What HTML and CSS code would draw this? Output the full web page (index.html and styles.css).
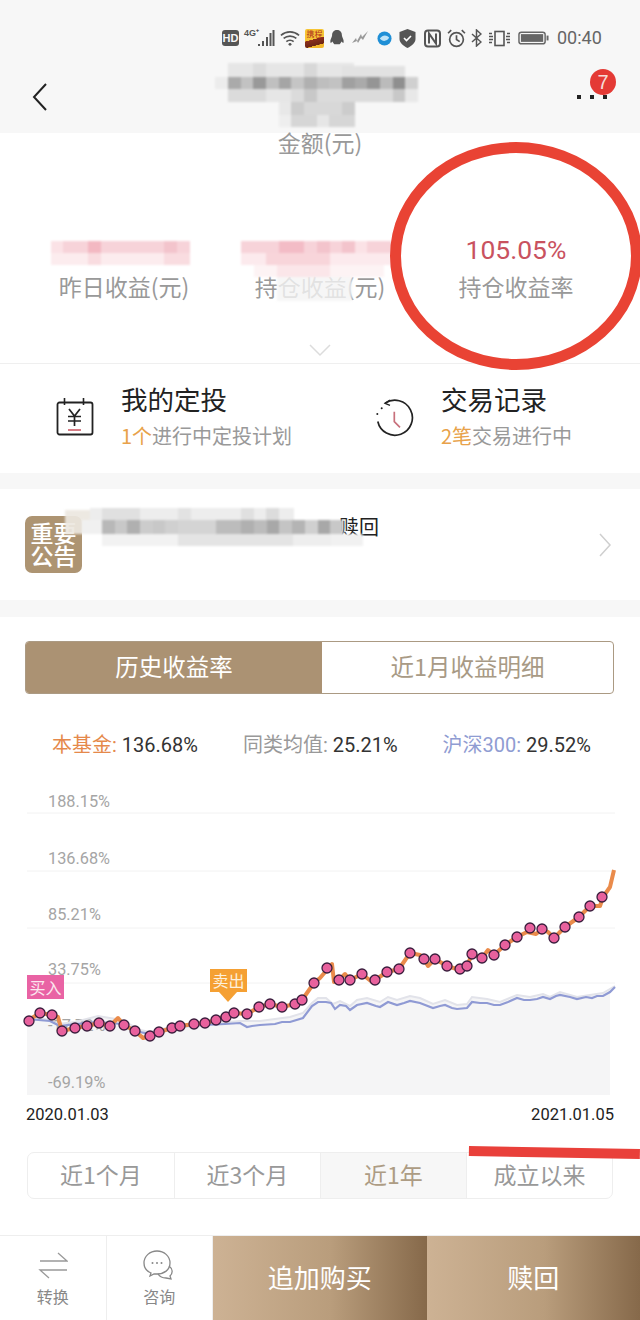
FILE: index.html
```html
<!DOCTYPE html>
<html lang="zh">
<head>
<meta charset="utf-8">
<title>持仓</title>
<link rel="stylesheet" href="styles.css">
</head>
<body>
<div class="page">
  <header class="top">
    <div class="status">
      <span class="hd">HD</span>
      <span class="net">4G⁺</span>
      <svg class="st sig" width="17" height="18" viewBox="0 0 17 18"><path d="M1 15v2M5 12v5M9 8v9M12.500 4v13M15.500 1v16" stroke="#555" stroke-width="2"/></svg>
      <svg class="st" width="20" height="18" viewBox="0 0 22 18"><path d="M1 6c6-5 14-5 20 0M4 9.500c4-3.500 10-3.500 14 0M7 13c2-2 6-2 8 0" fill="none" stroke="#555" stroke-width="1.800"/><circle cx="11" cy="16" r="1.600" fill="#555"/></svg>
      <span class="appicon">携程</span>
      <svg class="st" width="16" height="20" viewBox="0 0 18 20"><path d="M9 1c-4 0-5.500 3-5.500 6 0 2-2.500 5-2 8 1 1 2-.5 2.500-1 .5 1.500 1 2 2 3h6c1-1 1.500-1.500 2-3 .5.500 1.500 2 2.500 1 .5-3-2-6-2-8 0-3-1.500-6-5.500-6z" fill="#555"/></svg>
      <svg class="st m1" width="18" height="16" viewBox="0 0 18 16"><path d="M1 13l4-5 1 3 4-7 1 3 6-6-5 9-2-2-3 5-1-2z" fill="#999"/></svg>
      <svg class="st m3" width="15" height="15" viewBox="0 0 16 16"><circle cx="8" cy="8" r="7.500" fill="#1f8fd6"/><path d="M3 8c3-4 7-4 10-1-2 4-7 5-10 1z" fill="#bfe3f7"/></svg>
      <svg class="st m2" width="17" height="19" viewBox="0 0 17 19"><path d="M8.500 0l8 3v7c0 4-4 7-8 9-4-2-8-5-8-9V3z" fill="#555"/><path d="M5 9l2.500 2.500L12 7" fill="none" stroke="#fff" stroke-width="1.600"/></svg>
      <svg class="st m3" width="17" height="19" viewBox="0 0 17 18"><rect x="1" y="1" width="15" height="16" rx="3" fill="none" stroke="#555" stroke-width="2"/><path d="M5 14V4l7 10V4" fill="none" stroke="#555" stroke-width="2"/></svg>
      <svg class="st m1" width="19" height="19" viewBox="0 0 18 18"><circle cx="9" cy="10" r="6.500" fill="none" stroke="#555" stroke-width="1.600"/><path d="M9 6v4l3 2M1 4l3-3M17 4l-3-3" fill="none" stroke="#555" stroke-width="1.600"/></svg>
      <svg class="st" width="11" height="18" viewBox="0 0 11 18"><path d="M1 5l9 8-4.500 4V1L10 5l-9 8" fill="none" stroke="#555" stroke-width="1.500"/></svg>
      <svg class="st m1" width="23" height="17" viewBox="0 0 23 16"><rect x="7" y="1" width="9" height="14" fill="none" stroke="#555" stroke-width="1.600"/><path d="M1 3h3M1 6h4M1 9h4M1 12h3M19 3h3M18 6h4M18 9h4M19 12h3" stroke="#555" stroke-width="1.300"/></svg>
      <svg class="st m2" width="31" height="14" viewBox="0 0 32 14"><rect x="1" y="1" width="27" height="12" rx="2.500" fill="none" stroke="#666" stroke-width="1.500"/><rect x="3" y="3" width="23" height="8" fill="#666"/><rect x="29.500" y="4.500" width="2" height="5" fill="#666"/></svg>
      <span class="time">00:40</span>
    </div>
    <div class="nav">
      <svg class="back" width="16" height="28" viewBox="0 0 16 28"><path d="M14 1L2 14l12 13" fill="none" stroke="#222" stroke-width="2"/></svg>
      <div class="more">
        <span class="dots">
          <i></i><i></i><i></i>
        </span>
        <span class="badge">7</span>
      </div>
    </div>
  </header>

  <section class="summary">
    <div class="amount">金额(元)</div>
    <div class="stats">
      <div class="stat"><div class="val"></div><div class="lbl">昨日收益(元)</div></div>
      <div class="stat"><div class="val"></div><div class="lbl">持仓收益(元)</div></div>
      <div class="stat"><div class="val rate">105.05%</div><div class="lbl">持仓收益率</div></div>
    </div>
    <svg class="down" width="24" height="14" viewBox="0 0 24 14"><path d="M2 2l10 10L22 2" fill="none" stroke="#dcdcdc" stroke-width="1.500"/></svg>
  </section>

  <section class="links">
    <div class="link">
      <svg class="link-ico cal" width="40" height="38" viewBox="0 0 40 38"><path d="M9.500 0v7M28.500 0v7" stroke="#222" stroke-width="1.600"/><rect x="2.500" y="4.500" width="35" height="32" rx="2" fill="none" stroke="#222" stroke-width="1.800"/><path d="M14 11l5.500 7 5.500-7M13 18.500h13M13 23h13M19.500 18v10" fill="none" stroke="#222" stroke-width="1.700"/><path d="M13 32h13" stroke="#c8505c" stroke-width="1.500"/></svg>
      <div class="link-text">
        <div class="link-title">我的定投</div>
        <div class="link-sub"><em>1个</em>进行中定投计划</div>
      </div>
    </div>
    <div class="link">
      <svg class="link-ico" width="40" height="40" viewBox="0 0 40 40"><path d="M10 4.300A17.500 17.500 0 1 1 2.800 22.500" fill="none" stroke="#222" stroke-width="1.700"/><path d="M15 1L10 4.300l5 2" fill="none" stroke="#222" stroke-width="1.300"/><circle cx="6.700" cy="9.300" r="1" fill="#222"/><circle cx="2.300" cy="15" r="1" fill="#222"/><path d="M19.300 12.700v10l5.700 5.600" fill="none" stroke="#c8707c" stroke-width="1.700"/></svg>
      <div class="link-text">
        <div class="link-title">交易记录</div>
        <div class="link-sub"><em>2笔</em>交易进行中</div>
      </div>
    </div>
  </section>

  <section class="notice">
    <div class="tag">重要<br>公告</div>
    <div class="notice-text">赎回</div>
    <svg class="chev" width="14" height="26" viewBox="0 0 14 26"><path d="M2 2l10 11L2 24" fill="none" stroke="#cfcfcf" stroke-width="1.500"/></svg>
  </section>

  <section class="perf">
    <div class="tabs">
      <div class="tab on">历史收益率</div>
      <div class="tab">近1月收益明细</div>
    </div>
    <div class="legend">
      <span><b class="c1">本基金:</b> 136.68%</span>
      <span><b class="c2">同类均值:</b> 25.21%</span>
      <span><b class="c3">沪深300:</b> 29.52%</span>
    </div>
    <div class="chart">
      <svg class="plot" width="640" height="324" viewBox="0 785 640 324">
        <g class="grid">
          <path d="M27 813H615M27 871H615M27 928H615M27 983H615"/>
        </g>
        <path class="area" d="M27 1018L45 1019L58 1024L75 1022L98 1016L122 1020L140 1030L150 1032L175 1026L205 1024L240 1021L260 1021L290 1017L303 1013L312 1003L318 998L326 998L333 1004L340 1001L350 1006L357 1000L367 998L380 1002L388 997L397 1000L410 996L420 998L433 1004L445 1000L457 1005L467 1004L472 997L487 999L500 1002L517 995L530 997L543 994L550 997L560 992L577 997L603 993L610 990V1095H27Z"/>
        <g class="ylab">
          <text x="48" y="807">188.15%</text>
          <text x="48" y="864">136.68%</text>
          <text x="48" y="920">85.21%</text>
          <text x="48" y="975">33.75%</text>
          <text x="48" y="1031">-17.72%</text>
          <text x="48" y="1088">-69.19%</text>
        </g>
        <path class="peer" d="M27 1018L45 1019L58 1024L75 1022L98 1016L122 1020L140 1030L150 1032L175 1026L205 1024L240 1021L260 1021L290 1017L303 1013L312 1003L318 998L326 998L333 1004L340 1001L350 1006L357 1000L367 998L380 1002L388 997L397 1000L410 996L420 998L433 1004L445 1000L457 1005L467 1004L472 997L487 999L500 1002L517 995L530 997L543 994L550 997L560 992L577 997L603 993L615 986"/>
        <path class="index" d="M27 1019L50 1021L60 1026L75 1024L98 1022L122 1024L140 1032L150 1034L175 1027L205 1025L225 1024L240 1023L247 1027L252 1026L260 1025L275 1024L282 1022L290 1022L303 1018L312 1006L318 1002L326 1002L331 1003L335 1009L340 1005L346 1006L350 1010L357 1005L367 1003L376 1006L380 1007L388 1002L397 1005L404 1003L410 1001L420 1003L433 1008L440 1006L445 1005L452 1008L457 1009L467 1008L472 1002L480 1003L487 1003L494 1005L500 1005L508 1002L517 998L524 1000L530 1000L537 999L543 997L550 999L556 996L560 995L570 997L577 999L586 997L592 998L597 996L603 996L610 992L615 987"/>
        <path class="fund" d="M27 1021L40 1013L52 1015L58 1017L62 1031L75 1028L87 1026L99 1023L110 1026L118 1018L124 1025L135 1031L143 1038L150 1036L159 1032L172 1028L180 1026L194 1024L205 1023L216 1020L226 1015L234 1013L247 1014L259 1007L270 1004L282 1007L295 1004L302 1000L314 983L320 978L332 964L334 982L339 980L345 974L350 980L362 974L372 982L375 980L387 972L399 969L410 953L420 955L424 959L428 966L435 959L447 966L460 970L467 966L472 954L482 958L488 950L494 955L505 945L517 937L527 932L536 934L542 929L548 932L554 938L565 927L579 917L590 906L600 906L603 897L610 887L614 870"/>
        <g class="marks">
          <circle cx="29" cy="1021" r="5"/><circle cx="40" cy="1013" r="5"/><circle cx="52" cy="1015" r="5"/><circle cx="62" cy="1031" r="5"/><circle cx="75" cy="1028" r="5"/><circle cx="87" cy="1026" r="5"/><circle cx="99" cy="1023" r="5"/><circle cx="110" cy="1026" r="5"/><circle cx="124" cy="1025" r="5"/><circle cx="135" cy="1031" r="5"/><circle cx="150" cy="1036" r="5"/><circle cx="159" cy="1032" r="5"/><circle cx="172" cy="1028" r="5"/><circle cx="180" cy="1026" r="5"/><circle cx="194" cy="1024" r="5"/><circle cx="205" cy="1023" r="5"/><circle cx="216" cy="1020" r="5"/><circle cx="226" cy="1017" r="5"/><circle cx="234" cy="1013" r="5"/><circle cx="247" cy="1014" r="5"/><circle cx="259" cy="1007" r="5"/><circle cx="270" cy="1004" r="5"/><circle cx="282" cy="1007" r="5"/><circle cx="295" cy="1004" r="5"/><circle cx="302" cy="1000" r="5"/><circle cx="314" cy="983" r="5"/>
          <circle cx="327" cy="968" r="5"/><circle cx="339" cy="980" r="5"/><circle cx="350" cy="980" r="5"/><circle cx="362" cy="974" r="5"/><circle cx="375" cy="980" r="5"/><circle cx="387" cy="972" r="5"/><circle cx="399" cy="969" r="5"/><circle cx="410" cy="953" r="5"/><circle cx="424" cy="959" r="5"/><circle cx="435" cy="959" r="5"/><circle cx="447" cy="966" r="5"/><circle cx="460" cy="969" r="5"/><circle cx="467" cy="966" r="5"/><circle cx="472" cy="954" r="5"/><circle cx="482" cy="958" r="5"/><circle cx="494" cy="955" r="5"/><circle cx="505" cy="945" r="5"/><circle cx="517" cy="937" r="5"/><circle cx="530" cy="928" r="5"/><circle cx="542" cy="929" r="5"/><circle cx="554" cy="938" r="5"/><circle cx="565" cy="927" r="5"/><circle cx="579" cy="917" r="5"/><circle cx="590" cy="906" r="5"/><circle cx="602" cy="897" r="5"/>
        </g>
      </svg>
      <span class="flag buy">买入</span>
      <span class="flag sell">卖出</span>
    </div>
    <div class="dates"><span>2020.01.03</span><span>2021.01.05</span></div>
    <div class="ranges">
      <div class="range">近1个月</div>
      <div class="range">近3个月</div>
      <div class="range on">近1年</div>
      <div class="range">成立以来</div>
    </div>
  </section>

  <footer class="bar">
    <div class="bar-item">
      <svg width="30" height="30" viewBox="0 0 30 30"><path d="M2 11h27L20 3M29 20H2l9 8" fill="none" stroke="#999" stroke-width="1.300"/></svg>
      <span>转换</span>
    </div>
    <div class="bar-item">
      <svg width="32" height="30" viewBox="0 0 32 30"><path d="M8 23C3 21 1 17 1 13 1 6 7 1 14 1s13 5 13 12-6 11-13 11c-1 0-2 0-3 0l-4 2z" fill="none" stroke="#888" stroke-width="1.300"/><path d="M26 16c4 3 4 7 1 10l1 3-5-1c-3 0-6-1-8-4" fill="none" stroke="#888" stroke-width="1.300"/><circle cx="9.500" cy="13" r="1" fill="#888"/><circle cx="14" cy="13" r="1" fill="#888"/><circle cx="18.500" cy="13" r="1" fill="#888"/></svg>
      <span>咨询</span>
    </div>
    <div class="cta">追加购买</div>
    <div class="cta">赎回</div>
  </footer>

  <svg class="mosaic" width="640" height="1320" viewBox="0 0 640 1320">
    <g>
      <rect x="228" y="63" width="126" height="14" fill="#e6e6e6"/><rect x="253" y="63" width="13" height="14" fill="#dcdcdc"/><rect x="304" y="63" width="13" height="14" fill="#d8d8d8"/><rect x="342" y="66" width="63" height="11" fill="#e2e2e2"/>
      <rect x="215" y="77" width="13" height="12" fill="#ececec"/>
      <rect x="228" y="77" width="13" height="12" fill="#aaa"/><rect x="241" y="77" width="12" height="12" fill="#c2c2c2"/><rect x="253" y="77" width="13" height="12" fill="#999"/><rect x="266" y="77" width="13" height="12" fill="#c0c0c0"/><rect x="279" y="77" width="12" height="12" fill="#a5a5a5"/><rect x="291" y="77" width="13" height="12" fill="#c5c5c5"/><rect x="304" y="77" width="13" height="12" fill="#b0b0b0"/><rect x="317" y="77" width="12" height="12" fill="#bebebe"/><rect x="329" y="77" width="13" height="12" fill="#c2c2c2"/><rect x="342" y="77" width="13" height="12" fill="#a0a0a0"/><rect x="355" y="77" width="12" height="12" fill="#aaa"/><rect x="367" y="77" width="13" height="12" fill="#959595"/><rect x="380" y="77" width="13" height="12" fill="#bbb"/><rect x="393" y="77" width="12" height="12" fill="#8f8f8f"/><rect x="405" y="77" width="13" height="12" fill="#d0d0d0"/>
      <rect x="228" y="89" width="190" height="13" fill="#dbdbdb"/><rect x="266" y="89" width="25" height="13" fill="#e6e6e6"/><rect x="304" y="89" width="13" height="13" fill="#c8c8c8"/><rect x="393" y="89" width="12" height="13" fill="#c8c8c8"/><rect x="405" y="89" width="13" height="13" fill="#e8e8e8"/>
      <rect x="279" y="102" width="76" height="13" fill="#d8d8d8"/><rect x="291" y="102" width="13" height="13" fill="#ccc"/><rect x="342" y="102" width="13" height="13" fill="#ccc"/><rect x="279" y="102" width="12" height="13" fill="#e8e8e8"/>
      <rect x="279" y="115" width="76" height="12" fill="#d6d6d6"/><rect x="279" y="115" width="12" height="12" fill="#eee"/><rect x="317" y="115" width="12" height="12" fill="#e6e6e6"/>
    </g>
    <g>
      <rect x="51" y="241" width="139" height="12" fill="#f7d3d9"/><rect x="88" y="241" width="13" height="12" fill="#f3b8c2"/><rect x="51" y="241" width="12" height="12" fill="#fbe2e6"/><rect x="164" y="241" width="13" height="12" fill="#f3c4cc"/>
      <rect x="51" y="253" width="139" height="12" fill="#fcecee"/><rect x="88" y="253" width="13" height="12" fill="#f9dce0"/><rect x="164" y="253" width="26" height="12" fill="#f9dce0"/>
      <rect x="241" y="241" width="151" height="12" fill="#f7d3d9"/><rect x="279" y="241" width="25" height="12" fill="#f3bcc6"/><rect x="317" y="241" width="13" height="12" fill="#f3c4cc"/><rect x="342" y="241" width="13" height="12" fill="#f3c4cc"/><rect x="355" y="241" width="12" height="12" fill="#fbe2e6"/>
      <rect x="241" y="253" width="151" height="12" fill="#fceaed"/><rect x="266" y="253" width="64" height="12" fill="#f8d5da"/>
      <rect x="254" y="265" width="130" height="12" fill="#fdf3f4"/><rect x="277" y="265" width="53" height="12" fill="#fbe6e9"/>
      <rect x="277" y="277" width="75" height="24" fill="#f4f4f4" opacity=".8"/>
    </g>
    <g>
      <rect x="65" y="510" width="37" height="24" fill="#ece7e0" opacity=".92"/>
      <rect x="90" y="508" width="204" height="12" fill="#ededed"/><rect x="102" y="508" width="38" height="12" fill="#e0e0e0"/><rect x="178" y="508" width="13" height="12" fill="#e2e2e2"/><rect x="241" y="508" width="13" height="12" fill="#e0e0e0"/><rect x="266" y="508" width="13" height="12" fill="#dcdcdc"/>
      <rect x="82" y="520" width="20" height="14" fill="#f0f0f0"/>
      <rect x="102" y="520" width="13" height="14" fill="#b8b8b8"/><rect x="115" y="520" width="12" height="14" fill="#c8c8c8"/><rect x="127" y="520" width="13" height="14" fill="#b0b0b0"/><rect x="140" y="520" width="13" height="14" fill="#ccc"/><rect x="153" y="520" width="12" height="14" fill="#c8c8c8"/><rect x="165" y="520" width="13" height="14" fill="#d0d0d0"/><rect x="178" y="520" width="38" height="14" fill="#d4d4d4"/><rect x="216" y="520" width="13" height="14" fill="#bcbcbc"/><rect x="229" y="520" width="12" height="14" fill="#bcbcbc"/><rect x="241" y="520" width="13" height="14" fill="#b0b0b0"/><rect x="254" y="520" width="13" height="14" fill="#bcbcbc"/><rect x="267" y="520" width="12" height="14" fill="#a8a8a8"/><rect x="279" y="520" width="13" height="14" fill="#c4c4c4"/><rect x="292" y="520" width="13" height="14" fill="#b4b4b4"/><rect x="305" y="520" width="13" height="14" fill="#d0d0d0"/><rect x="318" y="520" width="12" height="14" fill="#a8a8a8"/><rect x="330" y="520" width="13" height="14" fill="#c8c8c8"/>
      <rect x="102" y="534" width="76" height="12" fill="#f2f2f2"/><rect x="178" y="534" width="115" height="12" fill="#e4e4e4"/><rect x="293" y="534" width="38" height="12" fill="#eee"/><rect x="331" y="534" width="32" height="12" fill="#f1f1f1"/>
    </g>
  </svg>
  <div class="ring"></div>
  <div class="stroke"></div>
</div>
</body>
</html>
```
FILE: styles.css
```css
* { box-sizing: border-box; }
html, body { margin: 0; padding: 0; background: #fff; }
body { font-family: "Noto Sans CJK SC", "Liberation Sans", sans-serif; }
.page { position: relative; width: 640px; height: 1320px; overflow: hidden; }

.top { height: 133px; background: #f7f7f7; }
.status { height: 50px; padding: 26px 0 0 222px; display: flex; align-items: center; gap: 5px; color: #555; }
.hd { width: 17px; height: 16px; background: #555; color: #f7f7f7; font: bold 11px/16px "Liberation Sans", sans-serif; text-align: center; border-radius: 3px; flex: none; }
.net { width: 14px; font: bold 9px/10px "Liberation Sans", sans-serif; align-self: flex-start; margin-top: 2px; flex: none; white-space: nowrap; }
.sig { margin-left: -5px; }
.st { display: block; flex: none; }
.m1 { margin-left: 1px; }
.m2 { margin-left: 2px; }
.m3 { margin-left: 3px; }
.appicon { width: 19px; height: 19px; flex: none; background: linear-gradient(165deg, #f6c535 52%, #8c2f1c 53%, #6b2415 80%, #f2b62c 81%); color: #b0301e; font: 8px/10px "Noto Sans CJK SC", sans-serif; text-align: center; border-radius: 2px; overflow: hidden; }
.time { font: 18px/20px "Roboto", sans-serif; color: #666; margin-left: 3px; }
.nav { height: 83px; display: flex; justify-content: space-between; align-items: flex-start; padding: 0 33px 0 32px; }
.back { margin-top: 33px; }
.more { position: relative; margin-top: 45px; width: 30px; height: 8px; }
.dots { display: flex; justify-content: space-between; width: 30px; }
.dots i { width: 4px; height: 4px; background: #222; }
.badge { position: absolute; left: 13px; top: -26px; width: 26px; height: 26px; border-radius: 50%; background: #e43a35; color: #f5dcd8; font: 20px/26px "Liberation Sans", sans-serif; text-align: center; }

.summary { position: relative; display: flow-root; height: 231px; border-bottom: 1px solid #efefef; }
.amount { text-align: center; font-size: 23px; line-height: 24px; color: #999; margin-top: -3px; }
.stats { display: grid; grid-template-columns: 248px 144px 248px; margin-top: 83px; }
.stat { text-align: center; }
.val { height: 26px; font: 26.500px/26px "Roboto", sans-serif; }
.rate { color: #c9525f; }
.lbl { font-size: 23px; line-height: 30px; color: #999; margin-top: 8px; white-space: nowrap; }
.down { position: absolute; left: 308px; top: 210px; }

.links { height: 109px; display: flex; }
.link { width: 320px; display: flex; align-items: center; padding-left: 55px; }
.link-ico { flex: none; margin-right: 26px; }
.cal { margin-bottom: 4px; }
.link-text { padding-bottom: 6px; }
.link-title { font-size: 26.500px; line-height: 36px; color: #222; }
.link-sub { font-size: 20px; line-height: 28px; color: #999; margin-top: 5px; }
.link-sub em { font-style: normal; color: #e8a24a; }

.notice { position: relative; margin-top: 16px; height: 111px; display: flex; background: #fff; box-shadow: 0 -16px 0 #f7f7f7; }
.notice-text { position: absolute; left: 339px; top: 24px; font-size: 20px; line-height: 28px; color: #222; }
.tag { width: 57px; height: 57px; margin: 27px 0 0 25px; border-radius: 7px; background: #ad9472; color: #fff; font-size: 23px; line-height: 23px; font-weight: 500; text-align: center; padding-top: 5px; white-space: nowrap; }
.chev { position: absolute; left: 598px; top: 43px; }

.perf { border-top: 17px solid #f7f7f7; height: 635px; padding-top: 24px; }
.tabs { margin: 0 26px 0 25px; height: 53px; display: grid; grid-template-columns: 296px 1fr; border: 1.500px solid #ab9a83; border-radius: 4px; overflow: hidden; }
.tab { font-size: 23.500px; line-height: 49px; text-align: center; color: #a89a85; }
.tab.on { background: #ab9273; color: #fff; }
.legend { display: flex; justify-content: space-between; padding: 0 49px 0 52px; margin-top: 36px; font-size: 20px; line-height: 30px; color: #333; font-family: "Roboto", "Noto Sans CJK SC", sans-serif; }
.legend b { font-weight: 400; }
.c1 { color: #e5894b; }
.c2 { color: #999; }
.c3 { color: #8f9cd2; }
.chart { position: relative; height: 324px; margin-top: 25px; }
.plot { display: block; }
.grid path { stroke: #f2f2f2; fill: none; }
.area { fill: #f5f5f6; }
.ylab text { font: 16.300px "Roboto", sans-serif; fill: #a5a5a5; }
.peer { fill: none; stroke: #e2e3ea; stroke-width: 2; }
.index { fill: none; stroke: #8f9ad4; stroke-width: 2.200; }
.fund { fill: none; stroke: #ea8b4b; stroke-width: 4; stroke-linejoin: round; }
.marks circle { fill: #e8619d; stroke: #3a1d3d; stroke-width: 1.300; }
.flag { position: absolute; color: #fbe8ef; font-size: 16px; line-height: 24px; text-align: center; }
.buy { left: 27px; top: 190px; width: 37px; background: #e963a4; }
.sell { left: 210px; top: 184px; width: 37px; line-height: 23px; background: #f5a033; color: #fdf0dc; }
.sell::after { content: ""; position: absolute; left: 9px; top: 23px; border: 9px solid transparent; border-top: 10px solid #f5a033; border-bottom: 0; }
.dates { display: flex; justify-content: space-between; padding: 0 26px; margin-top: -4px; font: 16.500px/20px "Roboto", sans-serif; color: #222; }
.ranges { margin: 27px 27px 0 27px; height: 47px; display: grid; grid-template-columns: repeat(4, 1fr); border: 1px solid #eee; border-radius: 7px; overflow: hidden; }
.range { font-size: 23px; line-height: 42px; text-align: center; color: #999; border-left: 1px solid #eee; }
.range:first-child { border-left: 0; }
.range.on { background: #f7f7f7; color: #ad9c84; }

.bar { height: 85px; display: flex; border-top: 1px solid #eee; }
.bar-item { width: 106.500px; display: flex; flex-direction: column; align-items: center; padding-top: 14px; border-right: 1px solid #eee; color: #888; font-size: 16px; line-height: 22px; gap: 5px; }
.cta { width: 213.500px; background: linear-gradient(90deg, #cdb294, #b99d7c 55%, #86694a); color: #fff; font-size: 26px; line-height: 82px; text-align: center; }

.mosaic { position: absolute; left: 0; top: 0; filter: blur(.8px); }
.ring { position: absolute; left: 390px; top: 142px; width: 252px; height: 228px; border: 11px solid #e94334; border-radius: 50%; }
.stroke { position: absolute; left: 469px; top: 1146px; width: 171px; height: 10px; background: #e9403a; transform: rotate(1deg); transform-origin: left top; }
```
